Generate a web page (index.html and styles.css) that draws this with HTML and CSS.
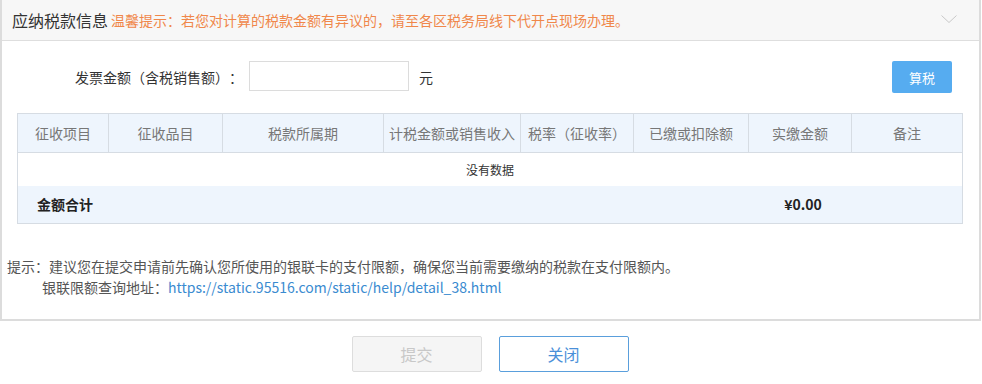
FILE: index.html
```html
<!DOCTYPE html>
<html lang="zh-CN">
<head>
<meta charset="utf-8">
<title>应纳税款信息</title>
<link rel="stylesheet" href="styles.css">
</head>
<body>
<div class="panel">
  <div class="panel-head">
    <span class="title">应纳税款信息</span>
    <span class="warn">温馨提示<span class="p">：</span>若您对计算的税款金额有异议的<span class="p">，</span>请至各区税务局线下代开点现场办理<span class="p">。</span></span>
    <svg class="chev" width="16" height="9" viewBox="0 0 16 9"><path d="M0.5 0.5 L8 7.5 L15.5 0.5" fill="none" stroke="#c8c8c8" stroke-width="1"/></svg>
  </div>
  <div class="panel-body">
    <div class="form-row">
      <label class="label">发票金额<span class="p">（</span>含税销售额<span class="p">）：</span></label>
      <input class="amount" type="text">
      <span class="unit">元</span>
      <button class="calc">算税</button>
    </div>
    <table class="grid">
      <colgroup>
        <col style="width:91px"><col style="width:114px"><col style="width:161px"><col style="width:137px">
        <col style="width:113px"><col style="width:115px"><col style="width:103px"><col style="width:111px">
      </colgroup>
      <thead>
        <tr>
          <th>征收项目</th><th>征收品目</th><th>税款所属期</th><th>计税金额或销售收入</th>
          <th>税率<span class="p">（</span>征收率<span class="p">）</span></th><th>已缴或扣除额</th><th>实缴金额</th><th>备注</th>
        </tr>
      </thead>
      <tbody>
        <tr class="empty"><td colspan="8">没有数据</td></tr>
        <tr class="total">
          <td colspan="6" class="total-label">金额合计</td>
          <td class="total-val">¥0.00</td>
          <td></td>
        </tr>
      </tbody>
    </table>
    <div class="tips">
      <p>提示<span class="p">：</span>建议您在提交申请前先确认您所使用的银联卡的支付限额<span class="p">，</span>确保您当前需要缴纳的税款在支付限额内<span class="p">。</span></p>
      <p class="indent">银联限额查询地址<span class="p">：</span><a class="link" href="#">https://static.95516.com/static/help/detail_38.html</a></p>
    </div>
  </div>
</div>
<div class="actions">
  <button class="btn btn-disabled">提交</button>
  <button class="btn btn-outline">关闭</button>
</div>
</body>
</html>
```

FILE: styles.css
```css
* { box-sizing: border-box; }
html, body { margin: 0; padding: 0; background: #fff; }
body {
  font-family: "Noto Sans CJK SC", "Noto Sans", sans-serif;
  font-size: 14px;
  color: #333;
  width: 982px;
  text-spacing-trim: space-all;
}
.p {
  font-family: "Noto Sans CJK TC", "Noto Sans CJK SC", sans-serif;
}
.panel {
  width: 981px;
  border: 2px solid #dcdcdc;
  border-top: none;
}
.panel-head {
  height: 41px;
  background: #f7f7f7;
  border-bottom: 1px solid #dedede;
  display: flex;
  align-items: center;
  padding-left: 10px;
  position: relative;
}
.title {
  font-size: 16px;
  color: #333;
  line-height: 40px;
}
.warn {
  font-size: 14px;
  color: #f0874a;
  margin-left: 3px;
  line-height: 40px;
}
.chev {
  position: absolute;
  right: 22px;
  top: 15px;
}
.panel-body {
  padding: 20px 0 21px 0;
}
.form-row {
  display: flex;
  align-items: center;
  height: 32px;
  padding-left: 73px;
}
.label {
  font-size: 14px;
  color: #333;
  width: 174px;
  white-space: nowrap;
}
.amount {
  width: 160px;
  height: 30px;
  border: 1px solid #dcdcdc;
  margin: 0 0 2px 0;
  padding: 0;
  outline: none;
}
.unit {
  margin-left: 10px;
  font-size: 14px;
}
.calc {
  margin-left: auto;
  margin-right: 27px;
  width: 60px;
  height: 32px;
  border: none;
  border-radius: 2px;
  background: #56acf0;
  color: #fff;
  font-family: inherit;
  font-size: 13px;
  padding: 0;
}
.grid {
  margin: 20px 0 0 15px;
  width: 946px;
  table-layout: fixed;
  border-collapse: collapse;
  border: 1px solid #d6dce3;
}
.grid th {
  height: 39px;
  background: #eef5fd;
  border: 1px solid #d6dce3;
  font-weight: normal;
  color: #777;
  font-size: 14px;
  padding: 0;
  white-space: nowrap;
}
.grid .empty td {
  height: 33px;
  text-align: center;
  font-size: 12px;
  color: #333;
  background: #fff;
  padding: 0;
}
.grid .total td {
  height: 38px;
  background: #eef5fd;
  font-weight: bold;
  color: #222;
  font-size: 14px;
  padding: 0;
}
.total-label { padding-left: 19px !important; }
.total-val { text-align: center; padding-left: 6px !important; }
.tips {
  margin-top: 32px;
  padding-left: 5px;
  color: #555;
  font-size: 14px;
  line-height: 21px;
}
.tips p { margin: 0; }
.tips .indent { padding-left: 35px; }
.link { color: #3a8bd0; text-decoration: none; }
.actions {
  display: flex;
  justify-content: center;
  gap: 17px;
  margin-top: 15px;
  padding-right: 2px;
}
.btn {
  width: 130px;
  height: 36px;
  border-radius: 2px;
  font-family: inherit;
  font-size: 16px;
  padding: 0;
}
.btn-disabled {
  background: #f5f5f5;
  border: 1px solid #dddddd;
  color: #c8c8c8;
}
.btn-outline {
  background: #fff;
  border: 1px solid #5a9fdc;
  color: #4a90d9;
}
```
